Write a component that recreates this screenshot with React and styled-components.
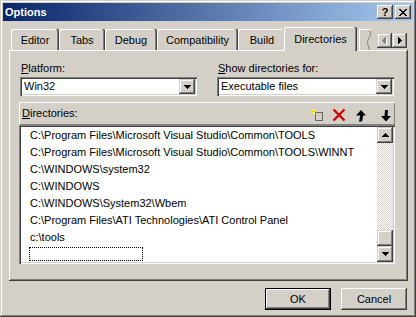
import React from 'react';
import styled, { createGlobalStyle, css } from 'styled-components';

const Global = createGlobalStyle`
  html, body { margin: 0; padding: 0; background: #D4D0C8; }
  body { font-family: "Liberation Sans", Arial, sans-serif; font-size: 11px; color: #000; }
  * { box-sizing: border-box; }
`;

const bevelRaised = css`
  box-shadow: inset -1px -1px #404040, inset 1px 1px #D4D0C8, inset -2px -2px #808080, inset 2px 2px #fff;
`;
const bevelSunken = css`
  box-shadow: inset 1px 1px #808080, inset 2px 2px #404040, inset -1px -1px #fff, inset -2px -2px #D4D0C8;
`;

const Window = styled.div`
  width: 416px;
  height: 317px;
  padding: 3px;
  background: #D4D0C8;
  display: flex;
  flex-direction: column;
  box-shadow: inset -1px -1px #404040, inset 1px 1px #D4D0C8, inset -2px -2px #808080, inset 2px 2px #fff;
`;

const TitleBar = styled.div`
  height: 18px;
  display: flex;
  align-items: center;
  padding: 0 2px;
  background: linear-gradient(to right, #0A246A, #A6CAF0);
`;

const TitleText = styled.span`
  flex: 1;
  color: #fff;
  font-weight: bold;
  font-size: 11px;
  line-height: 18px;
`;

const CaptionButton = styled.div`
  width: 16px;
  height: 14px;
  margin-left: ${p => p.$gap || 0}px;
  background: #D4D0C8;
  display: flex;
  align-items: center;
  justify-content: center;
  font-weight: bold;
  font-size: 11px;
  line-height: 14px;
  box-shadow: inset -1px -1px #404040, inset 1px 1px #fff, inset -2px -2px #808080;
`;

const Body = styled.div`
  flex: 1;
  display: flex;
  flex-direction: column;
  padding: 6px 5px 4px 6px;
`;

const TabStrip = styled.div`
  height: 24px;
  margin-bottom: -1px;
  padding-left: 2px;
  display: flex;
  align-items: flex-end;
  position: relative;
  z-index: 1;
`;

const Tab = styled.div`
  width: ${p => p.$w}px;
  height: 21px;
  margin-bottom: 1px;
  flex: none;
  display: flex;
  align-items: center;
  justify-content: center;
  background: #D4D0C8;
  border-radius: 2px 2px 0 0;
  white-space: nowrap;
  box-shadow: inset -1px 0 #404040, inset -2px 0 #808080, inset 1px 1px #fff;
  ${p => p.$active && css`
    width: ${p.$w + 4}px;
    height: 24px;
    margin: 0 -2px;
    position: relative;
    z-index: 2;
  `}
`;

const PartialTab = styled.div`
  width: 12px;
  height: 21px;
  margin: 0 0 1px 4px;
  flex: none;
  display: flex;
  justify-content: flex-end;
  box-shadow: inset 1px 1px #fff;
`;

const Spin = styled.div`
  margin-left: auto;
  margin-right: 1px;
  align-self: flex-start;
  margin-top: 6px;
  display: flex;
`;

const SpinButton = styled.div`
  width: 15px;
  height: 15px;
  display: flex;
  align-items: center;
  justify-content: center;
  background: #D4D0C8;
  ${bevelRaised}
`;

const Panel = styled.div`
  width: 399px;
  height: 231px;
  padding: 12px 10px 0;
  display: flex;
  flex-direction: column;
  box-shadow: inset -1px -1px #404040, inset 1px 1px #fff, inset -2px -2px #808080;
`;

const FieldRow = styled.div`
  display: flex;
  gap: 20px;
  margin-left: 1px;
`;

const Field = styled.div`
  width: 177px;
  display: flex;
  flex-direction: column;
  gap: 2px;
`;

const Label = styled.div`
  line-height: 13px;
  padding-left: ${p => p.$pad ?? 1}px;
  white-space: nowrap;
`;

const Combo = styled.div`
  height: 19px;
  padding: 2px;
  background: #fff;
  display: flex;
  ${bevelSunken}
`;

const ComboText = styled.div`
  flex: 1;
  padding-left: 2px;
  line-height: 15px;
`;

const DropButton = styled.div`
  width: 16px;
  display: flex;
  align-items: center;
  justify-content: center;
  background: #D4D0C8;
  ${bevelRaised}
`;

const DirBox = styled.div`
  margin-top: 6px;
  width: 376px;
  display: flex;
  flex-direction: column;
`;

const DirHeader = styled.div`
  height: 23px;
  display: flex;
  align-items: center;
  padding: 0 1px 0 3px;
  box-shadow: inset 1px 1px #fff, inset -1px -1px #808080;
`;

const Toolbar = styled.div`
  margin-left: auto;
  align-self: stretch;
  padding-top: 4px;
  display: flex;
  gap: 6px;
`;

const ToolIcon = styled.svg`
  width: 16px;
  height: 16px;
  margin-left: ${p => p.$ml || 0}px;
  display: block;
`;

const List = styled.div`
  height: 139px;
  padding: 2px;
  display: flex;
  background: #fff;
  ${bevelSunken}
`;

const Rows = styled.div`
  flex: 1;
  overflow: hidden;
`;

const Row = styled.div`
  height: 17px;
  line-height: 17px;
  padding-left: 9px;
  white-space: nowrap;
`;

const EditRow = styled.div`
  margin: 1px 0 0 8px;
  width: 114px;
  height: 14px;
  border: 1px dotted #000;
`;

const ScrollBar = styled.div`
  width: 16px;
  display: flex;
  flex-direction: column;
`;

const ScrollButton = styled.div`
  width: 16px;
  height: 16px;
  flex: none;
  display: flex;
  align-items: center;
  justify-content: center;
  background: #D4D0C8;
  ${bevelRaised}
`;

const Track = styled.div`
  flex: 1;
  display: flex;
  flex-direction: column;
  justify-content: flex-end;
  background-color: #D4D0C8;
  background-image: conic-gradient(#fff 25%, transparent 0 50%, #fff 0 75%, transparent 0);
  background-size: 2px 2px;
`;

const Footer = styled.div`
  margin-top: 7px;
  padding-right: 1px;
  display: flex;
  justify-content: flex-end;
  gap: 10px;
`;

const Button = styled.div`
  width: 66px;
  height: 22px;
  display: flex;
  align-items: center;
  justify-content: center;
  background: #D4D0C8;
  box-shadow: inset -1px -1px #404040, inset 1px 1px #fff, inset -2px -2px #808080, inset 2px 2px #D4D0C8;
  ${p => p.$default && css`
    box-shadow: inset 0 0 0 1px #000, inset -2px -2px #404040, inset 2px 2px #fff, inset -3px -3px #808080;
  `}
`;

const Glyph = ({ d, w, h, color = '#000' }) => (
  <svg width={w} height={h} viewBox={`0 0 ${w} ${h}`} shapeRendering="crispEdges" style={{ display: 'block' }}>
    <path d={d} fill={color} />
  </svg>
);

const DOWN = 'M0 0h7v1H0z M1 1h5v1H1z M2 2h3v1H2z M3 3h1v1H3z';
const UP = 'M3 0h1v1H3z M2 1h3v1H2z M1 2h5v1H1z M0 3h7v1H0z';
const RIGHT = 'M0 0h1v7H0z M1 1h1v5H1z M2 2h1v3H2z M3 3h1v1H3z';
const LEFT = 'M3 0h1v7H3z M2 1h1v5H2z M1 2h1v3H1z M0 3h1v1H0z';
const CLOSE = 'M0 0h2v1H0z M6 0h2v1H6z M1 1h2v1H1z M5 1h2v1H5z M2 2h4v1H2z M3 3h2v1H3z M2 4h4v1H2z M1 5h2v1H1z M5 5h2v1H5z M0 6h2v1H0z M6 6h2v1H6z';

const tabs = [
  { label: 'Editor', w: 48 },
  { label: 'Tabs', w: 46 },
  { label: 'Debug', w: 52 },
  { label: 'Compatibility', w: 81 },
  { label: 'Build', w: 48 },
  { label: 'Directories', w: 69, active: true },
];

const dirs = [
  'C:\\Program Files\\Microsoft Visual Studio\\Common\\TOOLS',
  'C:\\Program Files\\Microsoft Visual Studio\\Common\\TOOLS\\WINNT',
  'C:\\WINDOWS\\system32',
  'C:\\WINDOWS',
  'C:\\WINDOWS\\System32\\Wbem',
  'C:\\Program Files\\ATI Technologies\\ATI Control Panel',
  'c:\\tools',
];

export default function App() {
  return (
    <>
      <Global />
      <Window>
        <TitleBar>
          <TitleText>Options</TitleText>
          <CaptionButton>?</CaptionButton>
          <CaptionButton $gap={2}><Glyph d={CLOSE} w={8} h={7} /></CaptionButton>
        </TitleBar>
        <Body>
          <TabStrip>
            {tabs.map(t => (
              <Tab key={t.label} $w={t.w} $active={t.active}>{t.label}</Tab>
            ))}
            <PartialTab>
              <svg width="4" height="21" viewBox="0 0 4 21" style={{ display: 'block' }}>
                <path d="M2 1 C4 4 4 6 2 9 C0 12 0 15 2 18 L2 21" fill="none" stroke="#808080" strokeWidth="1" />
              </svg>
            </PartialTab>
            <Spin>
              <SpinButton>
                <svg width="5" height="8" viewBox="0 0 5 8" shapeRendering="crispEdges" style={{ display: 'block' }}>
                  <path d={LEFT} fill="#fff" transform="translate(1,1)" />
                  <path d={LEFT} fill="#808080" />
                </svg>
              </SpinButton>
              <SpinButton><Glyph d={RIGHT} w={4} h={7} /></SpinButton>
            </Spin>
          </TabStrip>
          <Panel>
            <FieldRow>
              <Field>
                <Label><u>P</u>latform:</Label>
                <Combo>
                  <ComboText>Win32</ComboText>
                  <DropButton><Glyph d={DOWN} w={7} h={4} /></DropButton>
                </Combo>
              </Field>
              <Field>
                <Label><u>S</u>how directories for:</Label>
                <Combo>
                  <ComboText>Executable files</ComboText>
                  <DropButton><Glyph d={DOWN} w={7} h={4} /></DropButton>
                </Combo>
              </Field>
            </FieldRow>
            <DirBox>
              <DirHeader>
                <Label $pad={0}><u>D</u>irectories:</Label>
                <Toolbar>
                  <ToolIcon viewBox="0 0 16 16">
                    <rect x="6.5" y="6.5" width="7" height="8" fill="none" stroke="#000" strokeWidth="1" strokeDasharray="1 1" />
                    <path d="M4.5 3v6 M1.5 5.5h6 M2.5 3.5l4 4 M6.5 3.5l-4 4" stroke="#FFFF00" strokeWidth="1" />
                    <rect x="4" y="5" width="1" height="1" fill="#808000" />
                  </ToolIcon>
                  <ToolIcon viewBox="0 0 16 16">
                    <path d="M2.5 3.5 L13.5 14.5 M13.5 3.5 L2.5 14.5" stroke="#D00000" strokeWidth="2.4" strokeLinecap="butt" />
                  </ToolIcon>
                  <ToolIcon viewBox="0 0 16 16">
                    <path d="M8 4 L13 9.5 L10 9.5 C10 11.5 9.5 13.5 9 15.5 L6 15.5 C6.5 13.5 7 11.5 7 9.5 L3 9.5 Z" fill="#000" />
                  </ToolIcon>
                  <ToolIcon viewBox="0 0 16 16" $ml={3}>
                    <path d="M7 4 L10 4 C10 6 9.5 8 9.5 10 L13 10 L8 15.5 L3 10 L6.5 10 C6.5 8 7 6 7 4 Z" fill="#000" />
                  </ToolIcon>
                </Toolbar>
              </DirHeader>
              <List>
                <Rows>
                  {dirs.map(d => <Row key={d}>{d}</Row>)}
                  <EditRow />
                </Rows>
                <ScrollBar>
                  <ScrollButton><Glyph d={UP} w={7} h={4} /></ScrollButton>
                  <Track><ScrollButton /></Track>
                  <ScrollButton><Glyph d={DOWN} w={7} h={4} /></ScrollButton>
                </ScrollBar>
              </List>
            </DirBox>
          </Panel>
          <Footer>
            <Button $default>OK</Button>
            <Button>Cancel</Button>
          </Footer>
        </Body>
      </Window>
    </>
  );
}
